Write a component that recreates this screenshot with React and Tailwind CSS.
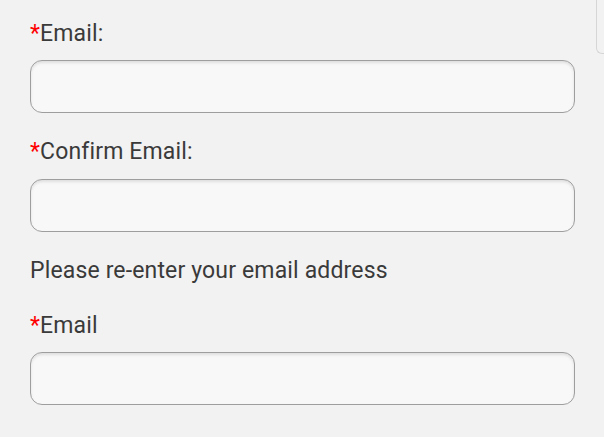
export default function App() {
  const label = "text-[23px] leading-[28px] tracking-[0.15px] text-[#3a3a3a]";
  const input =
    "block w-[545px] h-[53px] rounded-[12px] border border-[#9e9e9e] bg-[#f8f8f8] shadow-[inset_0_2px_3px_rgba(0,0,0,0.10)] outline-none px-3 text-[20px]";

  return (
    <div
      className="relative min-h-[437px] w-[604px] overflow-hidden bg-[#f2f2f2] pl-[30px] pt-[20px]"
      style={{ fontFamily: "Roboto, 'Liberation Sans', sans-serif" }}
    >
      {/* edge of the neighbouring panel */}
      <div className="absolute right-0 top-0 h-[54px] w-[8px] rounded-bl-[6px] border-b border-l border-[#d6d6d6]" />

      <label className={`block ${label}`}>
        <span className="text-[#ff0000]">*</span>Email:
      </label>
      <input className={`mt-[12px] ${input}`} type="email" />

      <label className={`mt-[25px] block ${label}`}>
        <span className="text-[#ff0000]">*</span>Confirm Email:
      </label>
      <input className={`mt-[13px] ${input}`} type="email" />

      <p className={`mt-[25px] ${label}`}>Please re-enter your email address</p>

      <label className={`mt-[27px] block ${label}`}>
        <span className="text-[#ff0000]">*</span>Email
      </label>
      <input className={`mt-[12px] ${input}`} type="email" />
    </div>
  );
}
